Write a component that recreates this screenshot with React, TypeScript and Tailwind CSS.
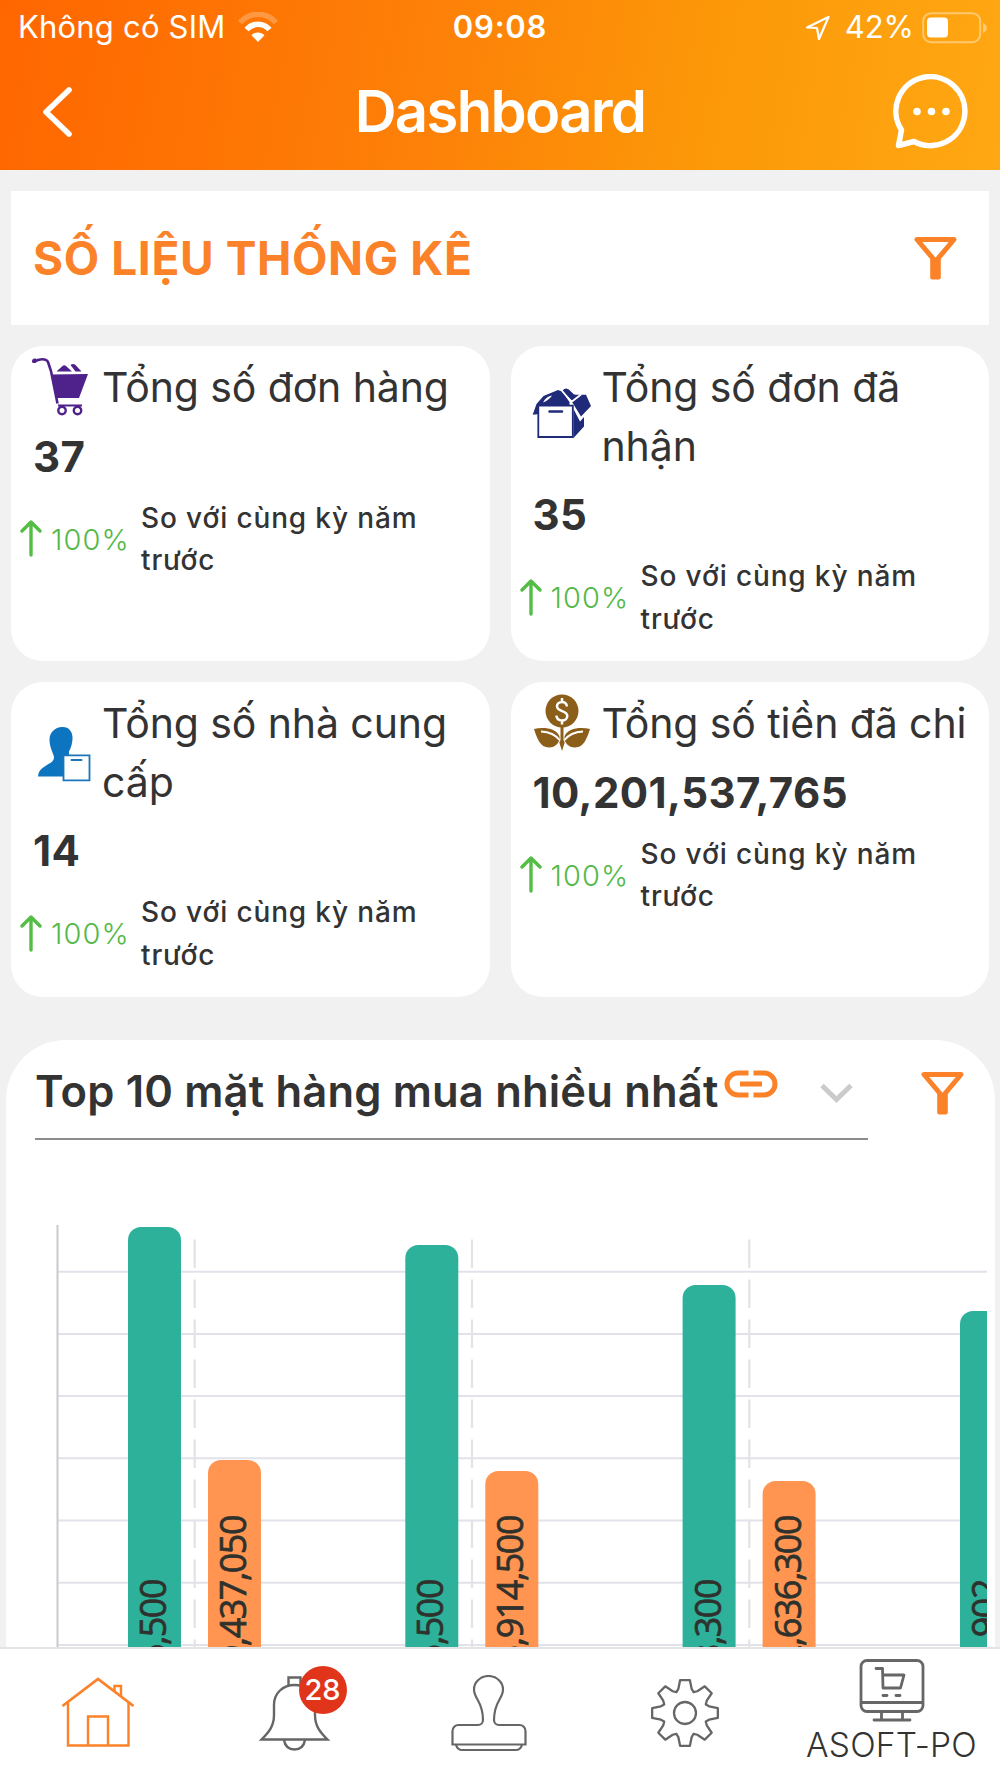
import React from "react";

const ORANGE = "#fb8229";
const GRAY = "#666666";

const Wifi = () => (
  <svg width="42" height="32" viewBox="0 0 42 32" fill="none">
    <path d="M3 10.500C13-.5 29-.5 39 10.500" stroke="#fff" strokeOpacity="0.250" strokeWidth="5.500" />
    <path d="M9.500 17.500C16 10.500 26 10.500 32.500 17.500" stroke="#fff" strokeWidth="5.500" />
    <path d="M21 30l-6.500-6.800c3.500-3.500 9.500-3.500 13 0z" fill="#fff" />
  </svg>
);

const Filter = () => (
  <svg width="43" height="44" viewBox="0 0 43 44" fill="none">
    <path d="M3 3.500h37L21.500 25.500z" stroke={ORANGE} strokeWidth="5" strokeLinejoin="round" />
    <path d="M16.200 22h10.600v19.500a2 2 0 0 1-2 2h-6.600a2 2 0 0 1-2-2z" fill={ORANGE} />
  </svg>
);

const CartIcon = () => (
  <svg className="-my-1 shrink-0" width="60" height="60" viewBox="0 0 60 60" fill="none">
    <path d="M3 5C8 1 15.500 1.500 17 5l3 9 6.500 32.500" stroke="#4f218b" strokeWidth="2.600" />
    <path d="M1 4.500c0-2.500 2-3.500 4.500-2.500L5 5.500C2.500 6.500 1 6 1 4.500z" fill="#4f218b" />
    <path d="M20 17.500l37-.5-9 24H24.800z" fill="#4f218b" />
    <path d="M25.500 14.500l6-5.500c1-1 2.500-1 3.500 0l6 5.500zM39.500 8c1.500-1.500 3.500-1.500 5 0l6 6.500h-6z" fill="#4f218b" />
    <path d="M27 48.500h24" stroke="#4f218b" strokeWidth="2" />
    <circle cx="31" cy="53.500" r="3.700" stroke="#4f218b" strokeWidth="2.400" />
    <circle cx="46.500" cy="53.500" r="3.700" stroke="#4f218b" strokeWidth="2.400" />
  </svg>
);

const BoxIcon = () => (
  <svg className="-my-1 shrink-0" width="60" height="60" viewBox="0 0 60 60" fill="none">
    <path d="M1.700 27.700L5.500 17l7-8L27 3l4 1.500 7.500 10.500v3.500H8.500v8.500z" fill="#1f2b78" />
    <path d="M7.300 18.700h34.500V50H7.300z" fill="#fff" stroke="#1f2b78" strokeWidth="1.800" />
    <path d="M12 15.500c2-4 5-6.500 9-7-2 3-5 5.500-9 7z" fill="#fff" />
    <path d="M32 3.500C33 1.500 36 1 37.500 2.500l5 5 3 .3h9.500L60 19 50 29.500 42 16.500z" fill="#1f2b78" />
    <path d="M31 4l10 10.500 9-7" stroke="#fff" strokeWidth="1.800" />
    <path d="M32 3.500C33 1.500 36 1 37.500 2.500l6 5.500 3 0-6 5z" fill="#1f2b78" />
    <path d="M42.500 22l6.500 12.500 4-4.500v9.500L42.500 51z" fill="#1f2b78" />
    <path d="M18.500 24.500h12.500" stroke="#1f2b78" strokeWidth="2.400" strokeLinecap="round" />
  </svg>
);

const SupplierIcon = () => (
  <svg className="-my-1 shrink-0" width="60" height="60" viewBox="0 0 60 60" fill="none">
    <path
      d="M31 4c7-.5 11 5 10.500 12-.3 5-1.500 9-3.500 12.500v9h-3V53.500H7C7.500 42 23 42 23 34.500c0-3.500-4.500-9-4.500-18C18.500 9 24 4.500 31 4z"
      fill="#0d74c0"
    />
    <path d="M32.500 32.300h26v25h-26z" fill="#fff" stroke="#1b75bb" strokeWidth="1.800" />
    <path d="M40.500 37.100h10" stroke="#1b75bb" strokeWidth="2" strokeLinecap="round" />
  </svg>
);

const MoneyIcon = () => (
  <svg className="-my-1 shrink-0" width="60" height="60" viewBox="0 0 60 60" fill="none">
    <circle cx="31" cy="18" r="16.500" fill="#8b5e1a" />
    <path
      d="M36 13.500c-.5-3-2.500-4.500-5-4.500-3 0-5 1.800-5 4.300 0 6 10.300 3.700 10.300 9.700 0 2.700-2.300 4.500-5.300 4.500-3.200 0-5.300-1.800-5.600-4.800M31 5v4M31 27.500v4"
      stroke="#fff"
      strokeWidth="2.500"
    />
    <path d="M29.500 33.500h3V47l1.200 2.500L31 58l-2.700-8.500L29.500 47z" fill="#8b5e1a" />
    <path d="M3 36c9-2.500 23-1 25.500 7.500.8 6-4 11-10.500 11C9 54.500 6 45 3 36z" fill="#8b5e1a" />
    <path d="M59 36c-9-2.500-23-1-25.500 7.500-.8 6 4 11 10.500 11C53 54.500 56 45 59 36z" fill="#8b5e1a" />
    <path d="M10 38.500c8 .5 14 2.500 18.500 8.500M52 38.500c-8 .5-14 2.500-18.500 8.500" stroke="#fff" strokeWidth="1.800" />
  </svg>
);

const stats = [
  { icon: <CartIcon />, title: "Tổng số đơn hàng", value: "37" },
  { icon: <BoxIcon />, title: "Tổng số đơn đã nhận", value: "35" },
  { icon: <SupplierIcon />, title: "Tổng số nhà cung cấp", value: "14" },
  { icon: <MoneyIcon />, title: "Tổng số tiền đã chi", value: "10,201,537,765" },
];

const StatCard = ({ icon, title, value }: { icon: React.ReactNode; title: string; value: string }) => (
  <div className="flex h-[315px] flex-col rounded-[32px] bg-white pt-3">
    <div className="flex items-center gap-[11px] pl-5">
      {icon}
      <h3 className="text-[41px] leading-[58.700px] tracking-[-0.100px] text-[#333]">{title}</h3>
    </div>
    <div className="mt-[11px] pl-[22px] text-[42px] leading-[58px] font-bold tracking-[0.400px] text-[#333]">
      {value}
    </div>
    <div className="mt-[11px] flex items-center">
      <svg className="ml-[9px] shrink-0" width="22" height="38" viewBox="0 0 22 38" fill="none">
        <path
          d="M11 35V3M2 11l9-9 9 9"
          stroke="#54bd45"
          strokeWidth="3.400"
          strokeLinecap="round"
          strokeLinejoin="round"
        />
      </svg>
      <span className="ml-[9px] w-[90px] text-[29px] font-light tracking-[1.100px] text-[#54b948]">100%</span>
      <p className="w-[300px] text-[28px] leading-[42.700px] font-medium tracking-[0.860px] text-[#333]">
        So với cùng kỳ năm trước
      </p>
    </div>
  </div>
);

const groups = [
  { x: 78, green: 7, orange: 240, greenText: "6,500", orangeText: "9,437,050" },
  { x: 355.3, green: 25, orange: 251, greenText: "5,500", orangeText: "5,914,500" },
  { x: 632.6, green: 65, orange: 261, greenText: "3,300", orangeText: "2,636,300" },
  { x: 910, green: 91, orange: 280, greenText: "902", orangeText: "" },
];

const Bar = ({ x, y, color, label, top }: { x: number; y: number; color: string; label: string; top: number }) => (
  <g>
    <rect x={x} y={y} width="53" height="600" rx="13" fill={color} />
    <text
      transform={`translate(${x + 38} ${top}) rotate(-90)`}
      textAnchor="end"
      fontSize="36"
      letterSpacing="-1.500"
      fill="#2f312d"
      stroke="#2f312d"
      strokeWidth="0.700"
      fontFamily="'Open Sans', sans-serif"
    >
      {label}
    </text>
  </g>
);

const Chart = () => (
  <svg className="mt-[80px] ml-[44.500px] block" width="937" height="427" viewBox="0 0 937 427">
    {[51.7, 113.9, 176.1, 238.3, 300.5, 362.7, 425].map((y) => (
      <path key={y} d={`M8 ${y}H937`} stroke="#e2e2ea" strokeWidth="2" />
    ))}
    <path d="M7.500 5V427" stroke="#cacacd" strokeWidth="2" />
    {groups.map((g) => (
      <g key={g.x}>
        <path d={`M${g.x + 66.7} 19.500V427`} stroke="#e2e2e8" strokeWidth="2.200" strokeDasharray="28.400 11.600" />
        <Bar x={g.x} y={g.green} color="#2db19b" label={g.greenText} top={360} />
        {g.orangeText && <Bar x={g.x + 80} y={g.orange} color="#ff9551" label={g.orangeText} top={296} />}
      </g>
    ))}
  </svg>
);

const gearPoints = () => {
  // radius / half-angle pairs for one tooth, repeated eight times
  const tooth = [
    [25, -15.5],
    [33.2, -8.5],
    [33.2, 8.5],
    [25, 15.5],
  ];
  const pts: string[] = [];
  for (let i = 0; i < 8; i++) {
    tooth.forEach(([r, a]) => {
      const t = ((i * 45 + a) * Math.PI) / 180;
      pts.push(`${36 + r * Math.sin(t)},${36 - r * Math.cos(t)}`);
    });
    const v = ((i * 45 + 22.5) * Math.PI) / 180;
    pts.push(`${36 + 22.5 * Math.sin(v)},${36 - 22.5 * Math.cos(v)}`);
  }
  return pts.join(" ");
};

const TabBar = () => (
  <nav className="grid h-[131px] grid-cols-[196px_195px_196px_196px_217px] border-t-2 border-[#e4e4e4] bg-white">
    <div className="flex justify-center pt-[27px]">
      <svg width="74" height="74" viewBox="0 0 74 74" fill="none" stroke={ORANGE} strokeWidth="2.400">
        <path d="M1.500 30L37 3l35.500 27" strokeWidth="2.800" />
        <path d="M7 27v42.500h60.500V27" />
        <path d="M27 69.500V40.500h20v29" />
        <path d="M53.500 15v-5h6.500v10" />
      </svg>
    </div>
    <div className="flex justify-center pt-[27px]">
      <div className="relative">
        <svg width="74" height="78" viewBox="0 0 74 78" fill="none" stroke={GRAY} strokeWidth="2.400">
          <path d="M31.500 9V1.500h12V9" />
          <path d="M4.500 63.500C12 56 17 50 17 39V29C17 17 26 9 37.500 9S58 17 58 29v10c0 11 5 17 12.500 24.500z" />
          <path d="M27 64c1 6 5 9.500 10.500 9.500S47 70 48 64" />
        </svg>
        <span className="absolute top-[-10px] left-[42px] flex h-12 w-12 items-center justify-center rounded-full bg-[#e0351b] text-[29px] font-medium text-white">
          28
        </span>
      </div>
    </div>
    <div className="flex justify-center pt-[26px]">
      <svg width="76" height="78" viewBox="0 0 76 78" fill="none" stroke={GRAY} strokeWidth="2.200">
        <path d="M1.500 69.500V56a6 6 0 0 1 6-6H27a5 5 0 0 0 5-5c0-19-9-21-9-30.500a14.500 13.500 0 0 1 29 0C52 24 43 26 43 45a5 5 0 0 0 5 5h20.500a6 6 0 0 1 6 6v13.500z" />
        <path d="M5 70c1 3 3 5 6 5h54c3 0 5-2 6-5" />
      </svg>
    </div>
    <div className="flex justify-center pt-[28px]">
      <svg width="72" height="72" viewBox="0 0 72 72" fill="none" stroke={GRAY} strokeWidth="2.300">
        <polygon points={gearPoints()} strokeLinejoin="round" />
        <circle cx="36" cy="36" r="11" />
      </svg>
    </div>
    <div className="flex flex-col items-center pt-[9px]">
      <svg width="66" height="66" viewBox="0 0 66 66" fill="none" stroke={GRAY} strokeWidth="2.800">
        <rect x="2" y="2.500" width="62" height="51" rx="6" />
        <path d="M2 44.500h62" />
        <path d="M22.500 53.500v8M43.500 53.500v8M15 62h36" strokeLinecap="round" />
        <path d="M17 10.500h6.500l.5 19.500h17.500l3.500-13H24" strokeLinecap="round" strokeLinejoin="round" />
        <path d="M24 37.500h4M37 37.500h4" strokeLinecap="round" />
      </svg>
      <span className="mt-px text-[33.500px] leading-[40px] font-light tracking-[0.200px] text-[#333]">ASOFT-PO</span>
    </div>
  </nav>
);

const App = () => {
  return (
    <div className="flex h-[1778px] w-[1000px] flex-col overflow-hidden bg-[#f1f1f1] font-['Inter',sans-serif]">
      <header className="h-[170px] shrink-0 bg-linear-[100deg,#ff6600_0%,#fd8208_45%,#fc9808_70%,#ffa813_100%] text-white">
        <div className="grid h-[54px] grid-cols-3 items-center pt-px pl-[18px] pr-3">
          <div className="flex items-center gap-3">
            <span className="text-[31px] tracking-[0.200px]">Không có SIM</span>
            <Wifi />
          </div>
          <span className="-ml-[6px] text-center text-[31px] font-semibold tracking-[0.800px]">09:08</span>
          <div className="flex items-center justify-end">
            <svg className="mr-[14px]" width="26" height="26" viewBox="0 0 26 26" fill="none">
              <path d="M2 12.500L23.500 2 14 24l-2-11z" stroke="#fff" strokeWidth="2.200" strokeLinejoin="round" />
            </svg>
            <span className="mr-2 text-[31px]">42%</span>
            <svg width="66" height="32" viewBox="0 0 66 32" fill="none">
              <rect x="1.200" y="1.200" width="57" height="29" rx="8" stroke="#fff" strokeOpacity="0.400" strokeWidth="2" />
              <rect x="5" y="5.500" width="21" height="20" rx="4" fill="#fff" />
              <path d="M61 11c5 2 5 8 0 10z" fill="#fff" fillOpacity="0.400" />
            </svg>
          </div>
        </div>
        <div className="grid h-[116px] grid-cols-3 items-start">
          <svg className="mt-[31px] ml-[41px]" width="32" height="54" viewBox="0 0 32 54" fill="none">
            <path d="M28 5L5 27l23 22" stroke="#fff" strokeWidth="5.600" strokeLinecap="round" strokeLinejoin="round" />
          </svg>
          <h1 className="mt-[22px] text-center text-[58px] leading-[70px] font-semibold tracking-[-1.700px]">
            Dashboard
          </h1>
          <svg className="mt-5 mr-[30px] justify-self-end" width="77" height="77" viewBox="0 0 77 77" fill="none">
            <path
              d="M8.500 56A34.500 34.500 0 1 1 21 67.500L5.500 71.500z"
              stroke="#fff"
              strokeWidth="5.500"
              strokeLinejoin="round"
            />
            <circle cx="24" cy="37.500" r="3.800" fill="#fff" />
            <circle cx="38.500" cy="37.500" r="3.800" fill="#fff" />
            <circle cx="53" cy="37.500" r="3.800" fill="#fff" />
          </svg>
        </div>
      </header>

      <section className="mx-[11px] mt-[21px] flex h-[134px] shrink-0 items-center justify-between bg-white pr-8 pl-[22px]">
        <h2 className="text-[46px] font-bold tracking-[0.600px] text-[#fb8229]">SỐ LIỆU THỐNG KÊ</h2>
        <Filter />
      </section>

      <section className="mx-[11px] mt-[21px] grid shrink-0 grid-cols-2 gap-[21px]">
        {stats.map((s) => (
          <StatCard key={s.title} icon={s.icon} title={s.title} value={s.value} />
        ))}
      </section>

      <section className="mx-[5.500px] mt-[43px] min-h-0 flex-1 overflow-hidden rounded-t-[60px] bg-white">
        <div className="flex">
          <div className="ml-[29.500px] flex h-[100px] w-[833px] items-center border-b-2 border-[#8c8c8c]">
            <h2 className="mt-[6px] text-[43.500px] font-semibold tracking-[0.180px] whitespace-nowrap text-[#333]">
              Top 10 mặt hàng mua nhiều nhất
            </h2>
            <svg className="mb-[11px] ml-[5px] shrink-0" width="54" height="28" viewBox="0 0 54 28" fill="none">
              <path
                d="M24.500 3H14a11 11 0 0 0 0 22h10.500M29.500 3H40a11 11 0 0 1 0 22H29.500M16 14h22"
                stroke={ORANGE}
                strokeWidth="5"
              />
            </svg>
            <svg className="mt-[8px] ml-[42px] shrink-0" width="33" height="21" viewBox="0 0 33 21" fill="none">
              <path d="M2 2.500l14.500 14 14.500-14" stroke="#cbcbcb" strokeWidth="5" />
            </svg>
          </div>
          <div className="mt-[31px] ml-[53px]">
            <Filter />
          </div>
        </div>
        <Chart />
      </section>

      <TabBar />
    </div>
  );
};

export default App;
